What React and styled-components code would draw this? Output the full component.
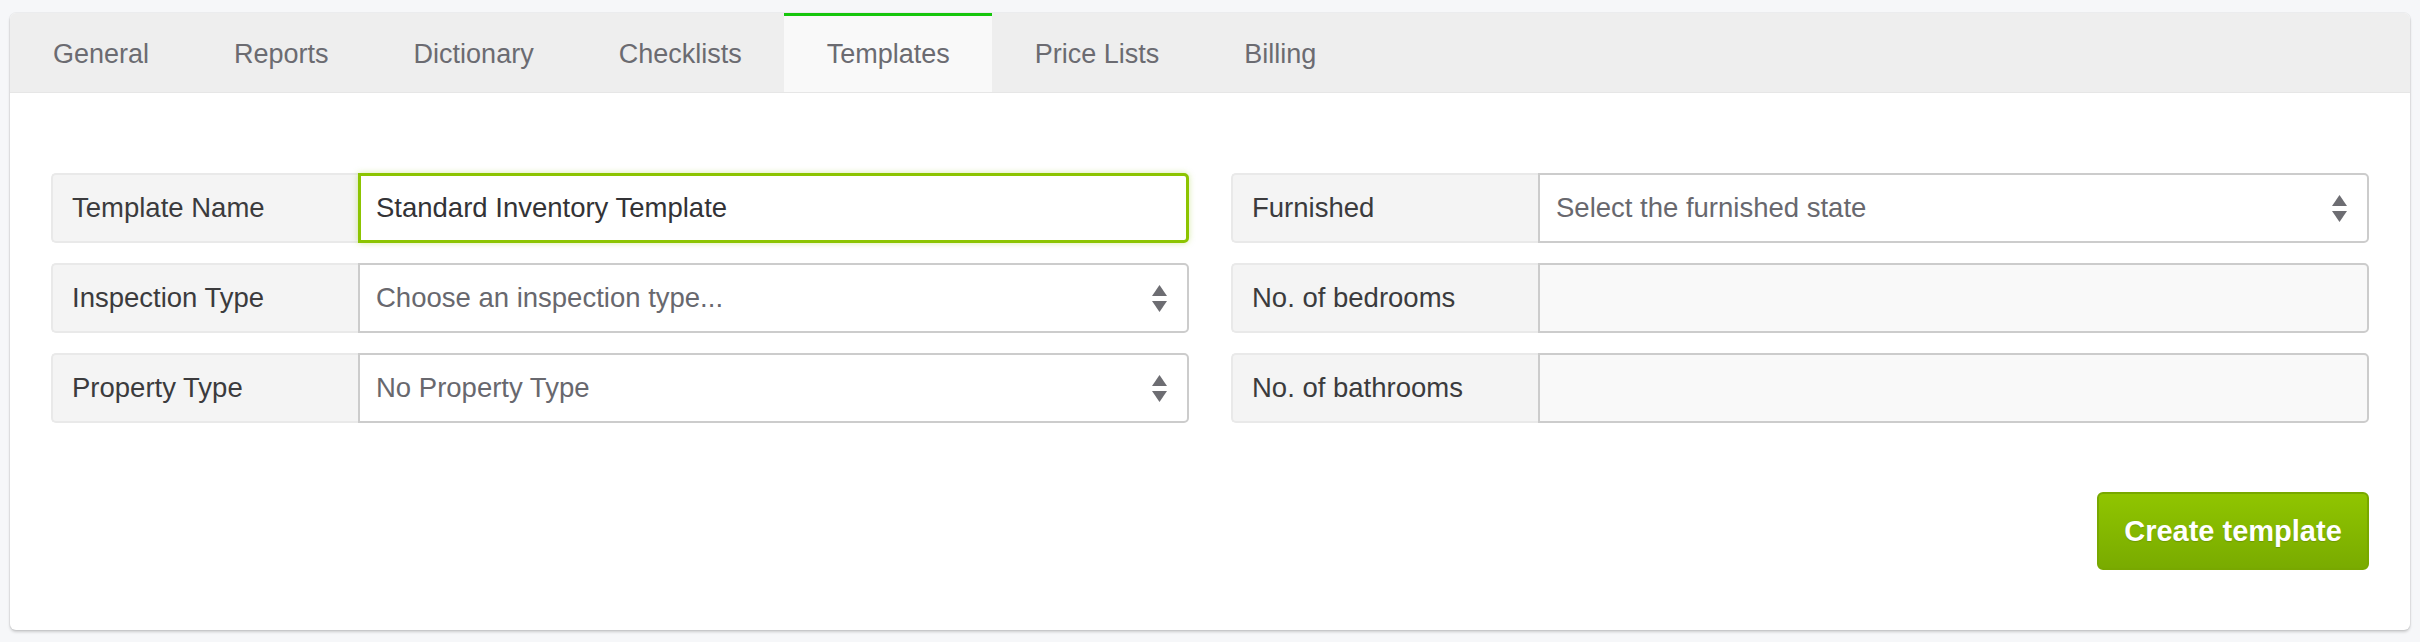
import styled, { createGlobalStyle, css } from "styled-components";

const GlobalStyle = createGlobalStyle`
  html, body {
    margin: 0;
    background: #f6f7f9;
    font-family: "Liberation Sans", Arial, sans-serif;
  }
`;

const tabs = ["General", "Reports", "Dictionary", "Checklists", "Templates", "Price Lists", "Billing"];

const SelectArrows = () => (
  <svg width="15" height="27" viewBox="0 0 15 27">
    <polygon points="0,11 7.5,0 15,11" fill="#6d6d72" />
    <polygon points="0,16 15,16 7.5,27" fill="#6d6d72" />
  </svg>
);

const App = () => {
  return (
    <Page>
      <GlobalStyle />
      <Card>
        <TabBar>
          {tabs.map((t) => (
            <Tab key={t} active={t === "Templates"}>
              {t}
            </Tab>
          ))}
        </TabBar>

        <Body>
          <FormGrid>
            <Field>
              <Label>Template Name</Label>
              <TextInput focused defaultValue="Standard Inventory Template" />
            </Field>
            <Field>
              <Label>Furnished</Label>
              <Select>
                <span>Select the furnished state</span>
                <SelectArrows />
              </Select>
            </Field>

            <Field>
              <Label>Inspection Type</Label>
              <Select>
                <span>Choose an inspection type...</span>
                <SelectArrows />
              </Select>
            </Field>
            <Field>
              <Label>No. of bedrooms</Label>
              <TextInput muted defaultValue="" />
            </Field>

            <Field>
              <Label>Property Type</Label>
              <Select>
                <span>No Property Type</span>
                <SelectArrows />
              </Select>
            </Field>
            <Field>
              <Label>No. of bathrooms</Label>
              <TextInput muted defaultValue="" />
            </Field>
          </FormGrid>

          <Actions>
            <Button>Create template</Button>
          </Actions>
        </Body>
      </Card>
    </Page>
  );
};

const Page = styled.div`
  padding: 13px 10px 12px;
`;

const Card = styled.div`
  background: #fff;
  border-radius: 6px;
  overflow: hidden;
  box-shadow: 0 0 0 1px rgba(0, 0, 0, 0.04), 0 2px 3px rgba(0, 0, 0, 0.18);
`;

const TabBar = styled.div`
  display: flex;
  height: 80px;
  background: #eeeeee;
  border-bottom: 1px solid #e6e6e6;
  box-sizing: border-box;
`;

const Tab = styled.div`
  display: flex;
  align-items: center;
  padding: 0 42px 0 43px;
  font-size: 27px;
  color: #6b6b71;
  box-sizing: border-box;
  border-top: 3px solid transparent;
  ${(p) =>
    p.active &&
    css`
      background: #f9f9f9;
      border-top-color: #16c60c;
    `}
`;

const Body = styled.div`
  padding: 80px 41px 60px;
`;

const FormGrid = styled.div`
  display: grid;
  grid-template-columns: 1fr 1fr;
  column-gap: 42px;
  row-gap: 20px;
`;

const Field = styled.div`
  display: flex;
  height: 70px;
`;

const Label = styled.div`
  display: flex;
  align-items: center;
  width: 307px;
  flex-shrink: 0;
  box-sizing: border-box;
  padding-left: 19px;
  background: #f4f4f4;
  border: 2px solid #e9e9e9;
  border-right: none;
  border-radius: 5px 0 0 5px;
  font-size: 27.5px;
  color: #3b3b3d;
`;

const controlBase = css`
  flex: 1;
  min-width: 0;
  box-sizing: border-box;
  height: 70px;
  border: 2px solid #cccccc;
  border-radius: 0 5px 5px 0;
  font-family: "Liberation Sans", Arial, sans-serif;
  font-size: 27.5px;
`;

const TextInput = styled.input`
  ${controlBase};
  padding: 0 16px;
  color: #333336;
  background: ${(p) => (p.muted ? "#f9f9f9" : "#fff")};
  outline: none;
  ${(p) =>
    p.focused &&
    css`
      border-color: #8cc400;
      border-width: 3px;
      padding-left: 15px;
      box-shadow: 0 0 6px rgba(140, 196, 0, 0.35);
    `}
`;

const Select = styled.div`
  ${controlBase};
  display: flex;
  align-items: center;
  justify-content: space-between;
  padding: 0 20px 0 16px;
  background: #fff;
  color: #68686e;
`;

const Actions = styled.div`
  display: flex;
  justify-content: flex-end;
  margin-top: 69px;
`;

const Button = styled.button`
  width: 272px;
  height: 78px;
  border: 2px solid #78a800;
  border-radius: 6px;
  background: linear-gradient(#90c500, #79ab00);
  color: #fff;
  font-family: "Liberation Sans", Arial, sans-serif;
  font-weight: 700;
  font-size: 29px;
  text-shadow: 0 1px 1px rgba(0, 0, 0, 0.15);
  cursor: pointer;
`;

export default App;
